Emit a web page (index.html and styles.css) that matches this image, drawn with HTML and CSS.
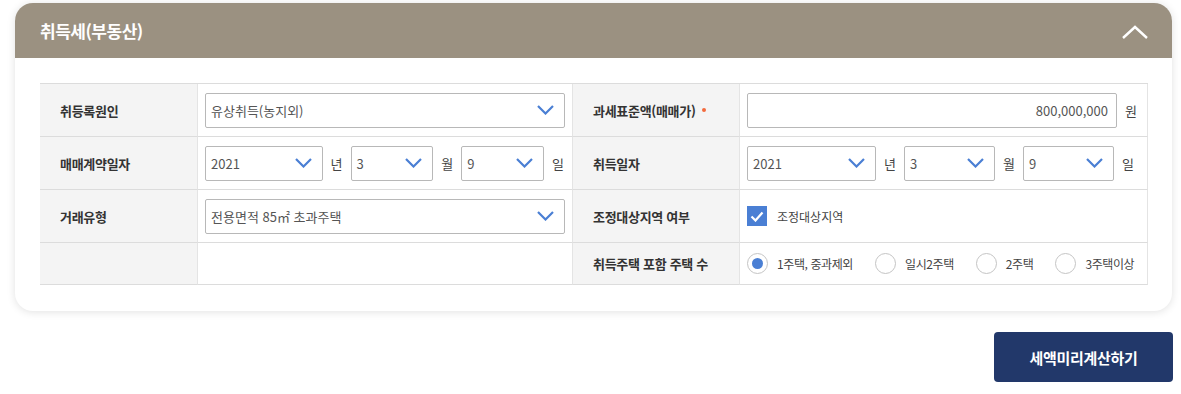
FILE: index.html
```html
<!DOCTYPE html>
<html lang="ko">
<head>
  <meta charset="UTF-8" />
  <title>취득세(부동산)</title>
  <link rel="stylesheet" href="styles.css">
</head>
<body>
  <div class="card">
    <div class="card-head">
      <h2>취득세(부동산)</h2>
      <svg class="fold" width="26" height="14" viewBox="0 0 26 14"><path d="M1 13 L13 2 L25 13" fill="none" stroke="#fff" stroke-width="2.4"/></svg>
    </div>

    <div class="card-body">
      <div class="grid">
        <!-- row 1 -->
        <div class="th">취등록원인</div>
        <div class="td">
          <div class="sel wide">
            <span>유상취득(농지외)</span>
            <svg width="17" height="10" viewBox="0 0 17 10"><path d="M1 1 L8.5 8.5 L16 1" fill="none" stroke="#4a7fd4" stroke-width="2.2"/></svg>
          </div>
        </div>
        <div class="th">과세표준액(매매가) <i class="req"></i></div>
        <div class="td">
          <div class="inp">800,000,000</div>
          <span class="unit">원</span>
        </div>

        <!-- row 2 -->
        <div class="th">매매계약일자</div>
        <div class="td">
          <div class="sel year"><span>2021</span><svg width="17" height="10" viewBox="0 0 17 10"><path d="M1 1 L8.5 8.5 L16 1" fill="none" stroke="#4a7fd4" stroke-width="2.2"/></svg></div>
          <span class="unit">년</span>
          <div class="sel small"><span>3</span><svg width="17" height="10" viewBox="0 0 17 10"><path d="M1 1 L8.5 8.5 L16 1" fill="none" stroke="#4a7fd4" stroke-width="2.2"/></svg></div>
          <span class="unit">월</span>
          <div class="sel small"><span>9</span><svg width="17" height="10" viewBox="0 0 17 10"><path d="M1 1 L8.5 8.5 L16 1" fill="none" stroke="#4a7fd4" stroke-width="2.2"/></svg></div>
          <span class="unit">일</span>
        </div>
        <div class="th">취득일자</div>
        <div class="td">
          <div class="sel year2"><span>2021</span><svg width="17" height="10" viewBox="0 0 17 10"><path d="M1 1 L8.5 8.5 L16 1" fill="none" stroke="#4a7fd4" stroke-width="2.2"/></svg></div>
          <span class="unit">년</span>
          <div class="sel small2"><span>3</span><svg width="17" height="10" viewBox="0 0 17 10"><path d="M1 1 L8.5 8.5 L16 1" fill="none" stroke="#4a7fd4" stroke-width="2.2"/></svg></div>
          <span class="unit">월</span>
          <div class="sel small2"><span>9</span><svg width="17" height="10" viewBox="0 0 17 10"><path d="M1 1 L8.5 8.5 L16 1" fill="none" stroke="#4a7fd4" stroke-width="2.2"/></svg></div>
          <span class="unit">일</span>
        </div>

        <!-- row 3 -->
        <div class="th">거래유형</div>
        <div class="td">
          <div class="sel wide">
            <span>전용면적 85㎡ 초과주택</span>
            <svg width="17" height="10" viewBox="0 0 17 10"><path d="M1 1 L8.5 8.5 L16 1" fill="none" stroke="#4a7fd4" stroke-width="2.2"/></svg>
          </div>
        </div>
        <div class="th">조정대상지역 여부</div>
        <div class="td">
          <label class="chk">
            <span class="box"><svg width="14" height="11" viewBox="0 0 14 11"><path d="M1.5 5.5 L5.5 9.5 L12.5 1.5" fill="none" stroke="#fff" stroke-width="2.2"/></svg></span>
            조정대상지역
          </label>
        </div>

        <!-- row 4 -->
        <div class="th last"></div>
        <div class="td last"></div>
        <div class="th last">취득주택 포함 주택 수</div>
        <div class="td last radios">
          <label class="rad on"><span class="dot"></span>1주택, 중과제외</label>
          <label class="rad"><span class="dot"></span>일시2주택</label>
          <label class="rad"><span class="dot"></span>2주택</label>
          <label class="rad"><span class="dot"></span>3주택이상</label>
        </div>
      </div>
    </div>
  </div>

  <div class="actions">
    <button class="calc">세액미리계산하기</button>
  </div>
</body>
</html>
```

FILE: styles.css
```css
body {
  margin: 0;
  background: #fff;
  font-family: "Noto Sans CJK KR", "Noto Sans", sans-serif;
  color: #333;
}

.card {
  margin: 3px 9px 0 15px;
  border-radius: 18px;
  background: #fff;
  box-shadow: 0 1px 8px rgba(0, 0, 0, 0.12);
  overflow: hidden;
}

.card-head {
  height: 55px;
  background: #9b9181;
  display: flex;
  align-items: center;
  justify-content: space-between;
  padding: 0 24px 0 25px;
}

.card-head h2 {
  margin: 0;
  color: #fff;
  font-size: 17px;
  font-weight: 700;
  letter-spacing: -0.5px;
}

.fold {
  margin-top: 2px;
}

.card-body {
  padding: 25px 24px 26px 25px;
}

.grid {
  display: grid;
  grid-template-columns: 157px 376px 166px 409px;
  border-top: 1px solid #dcdcdc;
}

.th,
.td {
  height: 52px;
  border-bottom: 1px solid #dcdcdc;
  display: flex;
  align-items: center;
}

.th {
  background: #f4f4f4;
  padding-left: 20px;
  font-size: 13px;
  font-weight: 700;
  color: #333;
  letter-spacing: -0.3px;
}

.td {
  padding-left: 7px;
  border-left: 1px solid #e4e4e4;
  border-right: 1px solid #e4e4e4;
}

.th.last,
.td.last {
  height: 41px;
}

.req {
  display: inline-block;
  width: 4px;
  height: 4px;
  border-radius: 50%;
  background: #f26a3d;
  margin-left: 6px;
}

.sel {
  height: 35px;
  box-sizing: border-box;
  border: 1px solid #b8b8b8;
  border-radius: 2px;
  display: flex;
  align-items: center;
  justify-content: space-between;
  padding: 0 10px 0 5px;
  font-size: 13px;
  color: #555;
  background: #fff;
}

.sel.wide { width: 360px; }
.sel.year { width: 118px; }
.sel.small { width: 83px; }
.sel.year2 { width: 129px; }
.sel.small2 { width: 91px; }

.unit {
  font-size: 13px;
  color: #444;
  margin: 0 8px;
}

.inp {
  width: 370px;
  height: 35px;
  box-sizing: border-box;
  border: 1px solid #b8b8b8;
  border-radius: 2px;
  display: flex;
  align-items: center;
  justify-content: flex-end;
  padding-right: 8px;
  font-size: 13px;
  color: #555;
}

.chk {
  display: flex;
  align-items: center;
  font-size: 12px;
  color: #444;
}

.box {
  width: 20px;
  height: 20px;
  background: #4a7fd4;
  display: flex;
  align-items: center;
  justify-content: center;
  margin-right: 10px;
}

.rad {
  display: flex;
  align-items: center;
  flex-shrink: 0;
  white-space: nowrap;
  font-size: 12px;
  color: #444;
  letter-spacing: -0.4px;
  margin-right: 22px;
}

.rad:last-child {
  margin-right: 0;
}

.rad .dot {
  width: 19px;
  height: 19px;
  border: 1px solid #c4c4c4;
  border-radius: 50%;
  margin-right: 9px;
  position: relative;
}

.rad.on .dot::after {
  content: '';
  position: absolute;
  left: 4px;
  top: 4px;
  width: 11px;
  height: 11px;
  border-radius: 50%;
  background: #4a7fd4;
}

.actions {
  display: flex;
  justify-content: flex-end;
  padding: 21px 8px 0 0;
}

.calc {
  width: 179px;
  height: 50px;
  border: 0;
  border-radius: 4px;
  background: #22386a;
  color: #fff;
  font-family: inherit;
  font-size: 15px;
  font-weight: 700;
  letter-spacing: -0.3px;
}
```
